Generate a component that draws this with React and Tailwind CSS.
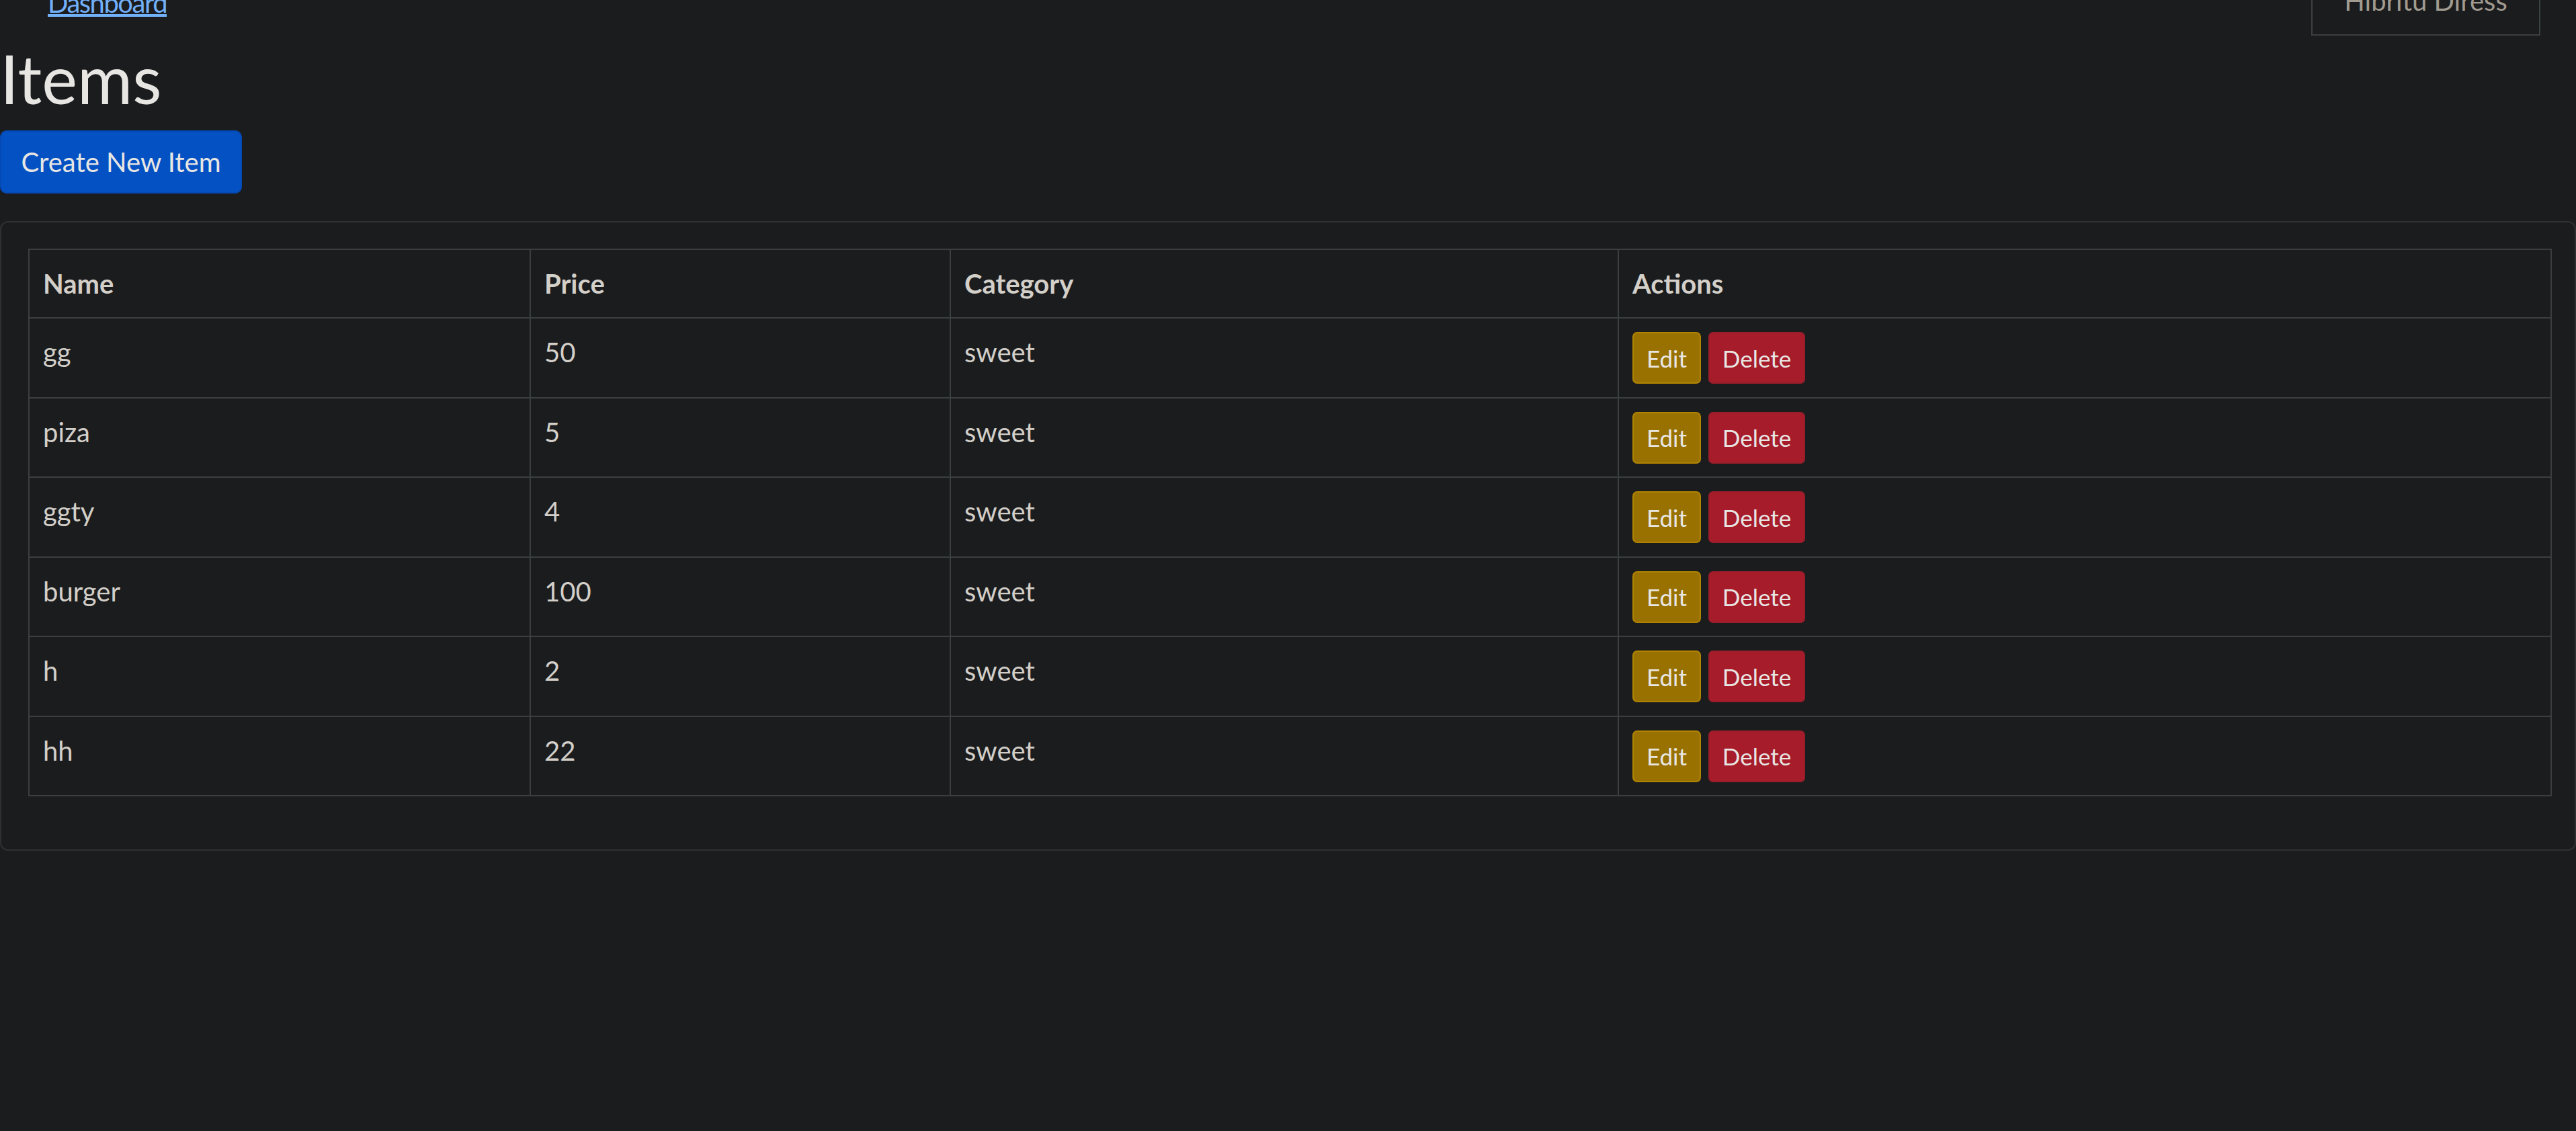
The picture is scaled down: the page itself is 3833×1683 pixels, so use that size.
const items = [
  { name: "gg", price: "50", category: "sweet" },
  { name: "piza", price: "5", category: "sweet" },
  { name: "ggty", price: "4", category: "sweet" },
  { name: "burger", price: "100", category: "sweet" },
  { name: "h", price: "2", category: "sweet" },
  { name: "hh", price: "22", category: "sweet" },
];

const App = () => {
  return (
    <div className="min-h-screen bg-[#1b1c1e] text-[#e8e6e3] font-['Lato','Segoe_UI',sans-serif] overflow-hidden">
      {/* top bar, page is scrolled a little so it is cut at the top */}
      <div className="flex justify-between h-[53px]">
        <a href="#" className="ml-[71px] -mt-[26px] text-[40px] leading-[60px] tracking-[-1.5px] text-[#72b0fa] underline">
          Dashboard
        </a>
        <div className="mr-[53px] -mt-[42px] w-[341px] border-2 border-[#3b4043] pt-[11px] pb-[20px] text-center text-[40px] leading-[60px] text-[#a19b90]">
          Hibritu Diress
        </div>
      </div>

      <h1 className="mt-[3px] mb-[18px] text-[100px] leading-[120px] font-normal text-[#e8e6e3]">Items</h1>

      <button className="h-[94px] w-[360px] rounded-[10px] border-2 border-[#0449b4] bg-[#0451c3] text-[40px] text-[#e8e6e3]">
        Create New Item
      </button>

      <div className="mt-[41px] rounded-[12px] border-2 border-[#2f3131] pt-[39px] pl-[40px] pr-[34px] pb-[79px]">
        <table className="w-full table-fixed border-collapse text-[40px] leading-[60px] text-[#d3cfc9]">
          <thead>
            <tr>
              <th className="w-[746px] border-2 border-[#3a3f41] px-[20px] py-[20px] text-left font-bold">Name</th>
              <th className="w-[625px] border-2 border-[#3a3f41] px-[20px] py-[20px] text-left font-bold">Price</th>
              <th className="w-[994px] border-2 border-[#3a3f41] px-[20px] py-[20px] text-left font-bold">Category</th>
              <th className="border-2 border-[#3a3f41] px-[20px] py-[20px] text-left font-bold">Actions</th>
            </tr>
          </thead>
          <tbody>
            {items.map((item) => (
              <tr key={item.name}>
                <td className="h-[118.5px] border-2 border-[#3a3f41] px-[20px] pt-[20px] align-top">{item.name}</td>
                <td className="border-2 border-[#3a3f41] px-[20px] pt-[20px] align-top">{item.price}</td>
                <td className="border-2 border-[#3a3f41] px-[20px] pt-[20px] align-top">{item.category}</td>
                <td className="border-2 border-[#3a3f41] px-[20px] pt-[20px] align-top">
                  <div className="flex gap-[11px]">
                    <button className="flex h-[77px] w-[102px] items-center justify-center rounded-[7px] border-2 border-[#b08400] bg-[#997100] text-[35px] text-[#e8e6e3]">
                      Edit
                    </button>
                    <button className="flex h-[77px] w-[144px] items-center justify-center rounded-[7px] border-2 border-[#9b1d2a] bg-[#a61c2b] text-[35px] text-[#e8e6e3]">
                      Delete
                    </button>
                  </div>
                </td>
              </tr>
            ))}
          </tbody>
        </table>
      </div>
    </div>
  );
};

export default App;
